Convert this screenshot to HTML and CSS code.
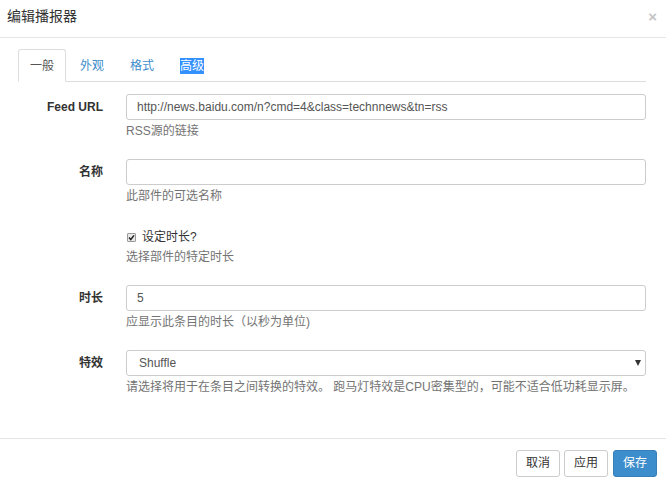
FILE: index.html
```html
<!DOCTYPE html>
<html lang="zh-CN">
<head>
<meta charset="utf-8">
<title>编辑播报器</title>
<link rel="stylesheet" href="styles.css">
</head>
<body>
<div class="modal">
  <div class="modal-header">
    <h4 class="modal-title">编辑播报器</h4>
    <span class="close">×</span>
  </div>
  <div class="modal-body">
    <ul class="nav-tabs">
      <li class="tab active"><span>一般</span></li>
      <li class="tab"><span>外观</span></li>
      <li class="tab"><span>格式</span></li>
      <li class="tab"><span class="selected">高级</span></li>
    </ul>
    <div class="tab-content">
      <div class="form-group">
        <label class="control-label">Feed URL</label>
        <div class="control">
          <input class="form-control" type="text" value="http://news.baidu.com/n?cmd=4&amp;class=technnews&amp;tn=rss">
          <p class="help">RSS源的链接</p>
        </div>
      </div>
      <div class="form-group">
        <label class="control-label">名称</label>
        <div class="control">
          <input class="form-control" type="text" value="">
          <p class="help">此部件的可选名称</p>
        </div>
      </div>
      <div class="form-group">
        <span class="control-label"></span>
        <div class="control">
          <div class="checkbox">
            <span class="check-box"><svg viewBox="0 0 9 9" width="9" height="9"><path d="M2 4.6 L3.8 6.5 L7 2.4" fill="none" stroke="#222" stroke-width="1.5"/></svg></span>
            <span class="check-text">设定时长?</span>
          </div>
          <p class="help help-tight">选择部件的特定时长</p>
        </div>
      </div>
      <div class="form-group">
        <label class="control-label">时长</label>
        <div class="control">
          <input class="form-control" type="text" value="5">
          <p class="help">应显示此条目的时长（以秒为单位)</p>
        </div>
      </div>
      <div class="form-group">
        <label class="control-label">特效</label>
        <div class="control">
          <div class="select-wrap">
            <select class="form-control select">
              <option>Shuffle</option>
            </select>
            <span class="caret"></span>
          </div>
          <p class="help">请选择将用于在条目之间转换的特效。 跑马灯特效是CPU密集型的，可能不适合低功耗显示屏。</p>
        </div>
      </div>
    </div>
  </div>
  <div class="modal-footer">
    <button class="btn">取消</button>
    <button class="btn">应用</button>
    <button class="btn btn-primary">保存</button>
  </div>
</div>
</body>
</html>
```
FILE: styles.css
```css
* { box-sizing: border-box; }
html, body { margin: 0; padding: 0; background: #fff; }
body {
  font-family: "Liberation Sans", "Noto Sans CJK SC", sans-serif;
  font-size: 12px;
  color: #333;
}
.modal { width: 666px; height: 486px; display: flex; flex-direction: column; }

.modal-header {
  height: 38px;
  border-bottom: 1px solid #e5e5e5;
  display: flex;
  justify-content: space-between;
  align-items: flex-start;
  padding: 6px 9px 0 7px;
}
.modal-title {
  margin: 0;
  font-size: 14px;
  line-height: 20px;
  font-weight: normal;
  color: #333;
}
.close {
  font-size: 15px;
  line-height: 15px;
  font-weight: bold;
  color: #c4c4c4;
  margin-top: 3px;
}

.modal-body { padding: 11px 20px 0 18px; flex: 1; }

.nav-tabs {
  list-style: none;
  margin: 0;
  padding: 0;
  display: flex;
  height: 33px;
  border-bottom: 1px solid #ddd;
}
.tab {
  height: 33px;
  margin-right: 2px;
  margin-bottom: -1px;
  padding: 0 11px;
  border: 1px solid transparent;
  border-radius: 3px 3px 0 0;
  display: flex;
  align-items: center;
  color: #3c8dcb;
  line-height: 16px;
}
.tab.active {
  border-color: #ddd #ddd #fff;
  color: #555;
  background: #fff;
}
.selected { background: #3390ff; color: #fff; }

.tab-content { padding-top: 12px; display: flex; flex-direction: column; gap: 20px; }

.form-group { display: grid; grid-template-columns: 85px 1fr; column-gap: 23px; }
.control-label {
  text-align: right;
  font-weight: bold;
  line-height: 26px;
  height: 26px;
  color: #333;
}
.control { display: flex; flex-direction: column; }
.form-control {
  width: 100%;
  height: 26px;
  border: 1px solid #ccc;
  border-radius: 3px;
  padding: 0 10px;
  font-family: "Liberation Sans", "Noto Sans CJK SC", sans-serif;
  font-size: 12px;
  color: #555;
  background: #fff;
  outline: none;
  margin: 0;
}
.help {
  margin: 3px 0 0;
  line-height: 16px;
  color: #737373;
}
.help-tight { margin-top: 3px; }

.checkbox {
  display: flex;
  align-items: center;
  padding-top: 4px;
  height: 22px;
  line-height: 18px;
  color: #333;
}
.check-box {
  width: 9px;
  height: 9px;
  border: 1px solid #9a9a9a;
  background: #e9e9e9;
  border-radius: 1px;
  display: flex;
  margin-left: 1px;
}
.check-box svg { display: block; margin: -1px; }
.check-text { margin-left: 6px; }

.select-wrap { position: relative; }
.select {
  appearance: none;
  -webkit-appearance: none;
  padding-left: 12px;
}
.caret {
  position: absolute;
  right: 5px;
  top: 10px;
  width: 0;
  height: 0;
  border-left: 3px solid transparent;
  border-right: 3px solid transparent;
  border-top: 6px solid #333;
}

.modal-footer {
  border-top: 1px solid #e5e5e5;
  padding: 11px 9px 9px;
  display: flex;
  justify-content: flex-end;
  gap: 4px;
}
.btn {
  height: 27px;
  padding: 0 9px;
  border: 1px solid #ccc;
  border-radius: 3px;
  background: #fff;
  color: #333;
  font-family: "Liberation Sans", "Noto Sans CJK SC", sans-serif;
  font-size: 12px;
  line-height: 25px;
  margin: 0;
}
.btn-primary {
  background: #3c8dcb;
  border-color: #367fb8;
  color: #fff;
  margin-left: 1px;
}
```
